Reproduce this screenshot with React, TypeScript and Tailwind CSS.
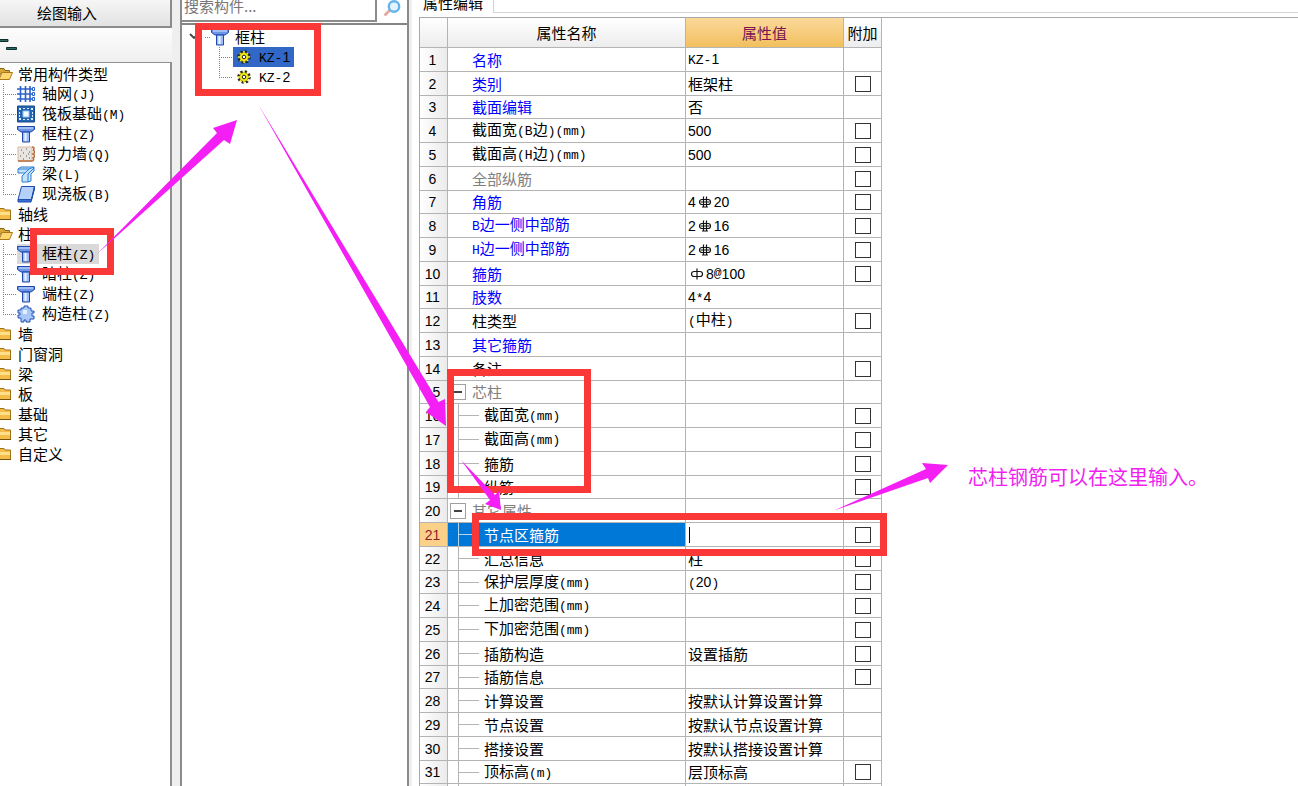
import { Fragment, useState } from "react";
import type { ReactNode } from "react";

type Tone = "blue" | "gray" | "black";

interface PropertyRow {
  name: string;
  value?: ReactNode;
  text?: string;
  tone?: Tone;
  kind?: "plain" | "group" | "child";
  check?: boolean;
}

const TONES: Record<Tone, string> = {
  blue: "text-[#0000ff]",
  gray: "text-[#808080]",
  black: "text-black",
};

// Latin runs are half the width of a Chinese character
function Label({ children }: { children: string }) {
  return (
    <>
      {children.split(/(\d+|[\x20-\x2f\x3a-\x7e]+)/).map((part, i) => {
        if (i % 2 === 0) return <Fragment key={i}>{part}</Fragment>;
        return /\d/.test(part) ? (
          <span key={i} className="font-['Liberation_Sans',sans-serif] text-sm/5">
            {part}
          </span>
        ) : (
          <span key={i} className="font-['Liberation_Mono',monospace] text-[13px]/5">
            {part}
          </span>
        );
      })}
    </>
  );
}

function Rebar({ grade }: { grade: 1 | 3 }) {
  return (
    <svg
      viewBox="0 0 14 14"
      className="mx-0.5 size-3.5 shrink-0"
      fill="none"
      stroke="#111"
      strokeWidth="1.2"
      role="img"
      aria-label={grade === 3 ? "HRB400" : "HPB300"}
    >
      <rect x="1.5" y="4.5" width="11" height="5" rx="2.5" />
      {grade === 1 ? <path d="M7 1.5v11" /> : <path d="M5.5 1.5v11M8.5 1.5v11M2.5 7h9M4 12h6" />}
    </svg>
  );
}

const ROWS: PropertyRow[] = [
  { name: "名称", tone: "blue", text: "KZ-1", check: false },
  { name: "类别", tone: "blue", text: "框架柱" },
  { name: "截面编辑", tone: "blue", text: "否", check: false },
  { name: "截面宽(B边)(mm)", text: "500" },
  { name: "截面高(H边)(mm)", text: "500" },
  { name: "全部纵筋", tone: "gray" },
  { name: "角筋", tone: "blue", value: <><Label>4</Label><Rebar grade={3} /><Label>20</Label></> },
  { name: "B边一侧中部筋", tone: "blue", value: <><Label>2</Label><Rebar grade={3} /><Label>16</Label></> },
  { name: "H边一侧中部筋", tone: "blue", value: <><Label>2</Label><Rebar grade={3} /><Label>16</Label></> },
  { name: "箍筋", tone: "blue", value: <><Rebar grade={1} /><Label>8@100</Label></> },
  { name: "肢数", tone: "blue", text: "4*4", check: false },
  { name: "柱类型", text: "(中柱)" },
  { name: "其它箍筋", tone: "blue", check: false },
  { name: "备注" },
  { name: "芯柱", tone: "gray", kind: "group", check: false },
  { name: "截面宽(mm)", kind: "child" },
  { name: "截面高(mm)", kind: "child" },
  { name: "箍筋", kind: "child" },
  { name: "纵筋", kind: "child" },
  { name: "其它属性", tone: "gray", kind: "group", check: false },
  { name: "节点区箍筋", kind: "child" },
  { name: "汇总信息", kind: "child", text: "柱" },
  { name: "保护层厚度(mm)", kind: "child", text: "(20)" },
  { name: "上加密范围(mm)", kind: "child" },
  { name: "下加密范围(mm)", kind: "child" },
  { name: "插筋构造", kind: "child", text: "设置插筋" },
  { name: "插筋信息", kind: "child" },
  { name: "计算设置", kind: "child", text: "按默认计算设置计算", check: false },
  { name: "节点设置", kind: "child", text: "按默认节点设置计算", check: false },
  { name: "搭接设置", kind: "child", text: "按默认搭接设置计算", check: false },
  { name: "顶标高(m)", kind: "child", text: "层顶标高" },
  { name: "", kind: "child", check: false },
];

function ColumnIcon() {
  return (
    <svg viewBox="0 0 18 18" className="size-[18px] shrink-0">
      <path d="M.5 1.5h17v3L14 7H4L.5 4.5z" fill="#6d96e6" stroke="#1d48ac" />
      <path d="M2 3h14" stroke="#d6e4ff" />
      <path d="M5.500 7h7v10h-7z" fill="#9dbcf8" stroke="#1d48ac" />
      <path d="M8.500 8v8" stroke="#eef5ff" strokeWidth="2" />
    </svg>
  );
}

function GridIcon() {
  return (
    <svg viewBox="0 0 18 18" className="size-[18px] shrink-0" fill="none" stroke="#2c62cc" strokeWidth="1.6">
      <path d="M3.500 1v16M8.500 1v16M13 1v16M0 4h15M0 9h15M0 14h15" />
      <path d="M15.500 2.500h2v3h-2zM15.500 7.500h2v3h-2zM15.500 12.500h2v3h-2z" strokeWidth="1" />
    </svg>
  );
}

function RaftIcon() {
  return (
    <svg viewBox="0 0 18 18" className="size-[18px] shrink-0">
      <path d="M.5 1h17v16H.5z" fill="#2464b0" stroke="#174a8c" />
      <path d="M6 6h6v6H6z" fill="#f4faff" stroke="#8fc0f0" />
      <path d="M2 3h2v2H2zM6 3h2v1H6zM10 3h2v1h-2zM14 3h2v2h-2zM2 7h1v2H2zM2 10h1v2H2zM15 7h1v2h-1zM15 10h1v2h-1zM2 13h2v2H2zM6 14h2v1H6zM10 14h2v1h-2zM14 13h2v2h-2z" fill="#d5e9ff" />
    </svg>
  );
}

function WallIcon() {
  return (
    <svg viewBox="0 0 18 18" className="size-[18px] shrink-0">
      <path d="M1 2h14v14H1z" fill="#e9e6e2" stroke="#dcb8a0" />
      <path d="M15 2c3 0 2 3 1 3 2 1 2 3 0 4 2 1 2 3 0 4 1 1 1 3-1 3H1" fill="none" stroke="#b96d3e" strokeWidth="1.5" />
      <path d="M4 5h1M9 4h1M12 7h1M6 8h1M3 11h1M9 11h1M12 13h1M6 14h1M11 9h1" stroke="#555" />
    </svg>
  );
}

function BeamIcon() {
  return (
    <svg viewBox="0 0 18 18" className="size-[18px] shrink-0" stroke="#2f7fd0" strokeLinejoin="round">
      <path d="M1 4l3-2h13v4l-3 3v7l-3 1H5v-6l3-3H1z" fill="#c4e2fb" />
      <path d="M1 4h11l5-2M12 4L5 11M17 3l-6 6v8M8 8l4-4" fill="none" />
    </svg>
  );
}

function SlabIcon() {
  return (
    <svg viewBox="0 0 18 18" className="size-[18px] shrink-0" stroke="#1e4fae" strokeLinejoin="round">
      <path d="M4.500 1.500h13l-3 13H1z" fill="#b5d0fb" />
      <path d="M1 14.500v2.500h13l3.500-13V1.500l-3 13z" fill="#3a6fd2" />
    </svg>
  );
}

function TieColumnIcon() {
  return (
    <svg viewBox="0 0 18 18" className="size-[18px] shrink-0">
      <path d="M4 3h3V1h4v2h3v3h3v2h-2v3h2v3h-4v3H9v-2H7v2H4v-4H1v-3h2V8H1V5h3z" fill="#a9c8fa" stroke="#2450b4" />
      <path d="M6 5h4v4H6z" fill="#e5f0ff" />
    </svg>
  );
}

function Folder({ open }: { open?: boolean }) {
  return (
    <svg viewBox="0 0 13 16" className="h-4 w-[13px] shrink-0">
      {open ? (
        <>
          <path d="M-1 2.500h5l1 2h4.500V8H-1z" fill="#d9a63a" stroke="#8c6415" />
          <path d="M-1 13.500L2 6.500h10.500l-3 7z" fill="#ffd970" stroke="#a9781c" />
        </>
      ) : (
        <>
          <path d="M-1 2.500h5l1 1.500h5.500v9.500H-1z" fill="#f3bd48" stroke="#a06f17" />
          <path d="M0 6h10v3H0z" fill="#ffdf8c" />
          <path d="M0 13.500h11" stroke="#7a5510" />
        </>
      )}
    </svg>
  );
}

function Gear() {
  return (
    <svg viewBox="0 0 14 14" className="size-3.5 shrink-0">
      <circle cx="7" cy="7" r="5.5" fill="none" stroke="#222" strokeWidth="2.5" strokeDasharray="2.2 2.12" />
      <circle cx="7" cy="7" r="4.5" fill="#f6ec1c" stroke="#4a4600" strokeWidth=".8" />
      <path d="M7 1v12M1 7h12M3 3l8 8M11 3l-8 8" stroke="#f6ec1c" strokeWidth="1.4" />
      <circle cx="7" cy="7" r="1.8" fill="#fff" stroke="#222" />
    </svg>
  );
}

type TreeLeaf = { label: string; icon: () => ReactNode; selected?: boolean };
type TreeNode = { label: string; open?: boolean; children?: TreeLeaf[] };

const TREE: TreeNode[] = [
  {
    label: "常用构件类型",
    open: true,
    children: [
      { label: "轴网(J)", icon: GridIcon },
      { label: "筏板基础(M)", icon: RaftIcon },
      { label: "框柱(Z)", icon: ColumnIcon },
      { label: "剪力墙(Q)", icon: WallIcon },
      { label: "梁(L)", icon: BeamIcon },
      { label: "现浇板(B)", icon: SlabIcon },
    ],
  },
  { label: "轴线" },
  {
    label: "柱",
    open: true,
    children: [
      { label: "框柱(Z)", icon: ColumnIcon, selected: true },
      { label: "暗柱(Z)", icon: ColumnIcon },
      { label: "端柱(Z)", icon: ColumnIcon },
      { label: "构造柱(Z)", icon: TieColumnIcon },
    ],
  },
  { label: "墙" },
  { label: "门窗洞" },
  { label: "梁" },
  { label: "板" },
  { label: "基础" },
  { label: "其它" },
  { label: "自定义" },
];

function Branch({ last }: { last?: boolean }) {
  return (
    <svg viewBox="0 0 14 20" className="h-5 w-3.5 shrink-0" stroke="#808080" strokeDasharray="1 1">
      <path d={last ? "M.5 0v10M0 10.5h14" : "M.5 0v20M0 10.5h14"} fill="none" />
    </svg>
  );
}

function ComponentTypes() {
  return (
    <aside className="flex w-[172px] shrink-0 flex-col">
      <button
        type="button"
        className="h-7 border-r-2 border-b-2 border-[#8c8c8c] bg-linear-to-b from-[#f6f6f6] to-[#e2e2e2] pr-9 text-center"
      >
        绘图输入
      </button>
      <div className="flex h-[34px] items-center bg-linear-to-b from-[#fdfdfd] to-[#f0f0f0]">
        <svg viewBox="0 0 20 14" className="h-3.5 w-5" fill="#2c6a62" stroke="#0c2f30">
          <path d="M-1 1.500h9v2h-9zM6.500 9.500h10v2h-10z" />
        </svg>
      </div>
      <ul className="flex-1 overflow-hidden border-t border-r-2 border-[#909090] bg-white pt-px">
        {TREE.map((node) => (
          <li key={node.label}>
            <div className="flex h-5 items-center gap-[5px]">
              <Folder open={node.open} />
              {node.label}
            </div>
            <ul>
              {node.children?.map((leaf, i) => (
                <li key={leaf.label} className="flex h-5 items-center pl-[3px]">
                  <Branch last={i === node.children!.length - 1} />
                  <span
                    className={
                      leaf.selected
                        ? "flex h-5 items-center gap-[7px] bg-[#d9d9d9] pr-1"
                        : "flex h-5 items-center gap-[7px]"
                    }
                  >
                    <leaf.icon />
                    <span>
                      <Label>{leaf.label}</Label>
                    </span>
                  </span>
                </li>
              ))}
            </ul>
          </li>
        ))}
      </ul>
    </aside>
  );
}

function ComponentList() {
  return (
    <section className="flex w-[229px] shrink-0 flex-col border-x-2 border-[#8a8a8a] bg-white">
      <div className="flex h-[25px] items-start border-b-2 border-[#858585]">
        <input
          type="text"
          aria-label="搜索构件"
          placeholder="搜索构件..."
          className="h-[22px] min-w-0 flex-1 border-r-2 border-b-2 border-[#8c8c8c] px-0.5 pb-2.5 placeholder:text-[#777]"
        />
        <button type="button" aria-label="搜索" className="flex w-[30px] justify-center">
          <svg viewBox="0 0 18 18" className="size-[18px]" fill="none">
            <path d="M2.500 14.500l4-4" stroke="#e3aaa0" strokeWidth="3" strokeLinecap="round" />
            <circle cx="11" cy="6.500" r="5.200" fill="#e3f4ff" stroke="#66b3ec" strokeWidth="2.4" />
          </svg>
        </button>
      </div>
      <div className="pt-0.5 pl-[7px]">
        <div className="flex h-5 items-center">
          <svg viewBox="0 0 10 10" className="size-2.5" fill="none" stroke="#444" strokeWidth="1.8">
            <path d="M1 2l4 4 4-4" />
          </svg>
          <svg viewBox="0 0 12 10" className="h-2.5 w-3" stroke="#808080" strokeDasharray="1 1">
            <path d="M6 5.500h6" />
          </svg>
          <span className="flex items-center gap-1.5">
            <ColumnIcon />
            框柱
          </span>
        </div>
        {["KZ-1", "KZ-2"].map((name, i) => (
          <div key={name} className="flex h-5 items-center pl-[30px]">
            <Branch last={i === 1} />
            <span
              className={
                i === 0 ? "flex h-5 items-center gap-2 bg-[#3168c8] px-1" : "flex h-5 items-center gap-2 px-1"
              }
            >
              <Gear />
              <span>
                <Label>{name}</Label>
              </span>
            </span>
          </div>
        ))}
      </div>
    </section>
  );
}

const LINE = "border-r border-b border-[#b4b4b4]";
const CELL_HEIGHT = "h-[23px] group-nth-[4n+3]:h-[22px]";

function NameCell({ row, selected }: { row: PropertyRow; selected: boolean }) {
  const kind = row.kind ?? "plain";
  const rule = selected ? "border-white/70" : "border-[#b4b4b4]";
  return (
    <div
      className={`flex items-center overflow-hidden whitespace-nowrap ${CELL_HEIGHT} ${selected ? "bg-[#0078d7] text-white" : TONES[row.tone ?? "black"]}`}
    >
      {kind === "plain" && <span className="w-6" />}
      {kind === "group" && (
        <button
          type="button"
          aria-label={`折叠${row.name}`}
          className="mr-1.5 ml-0.5 flex size-4 items-center justify-center border border-[#a0a0a0] bg-white"
        >
          <span className="h-0.5 w-2 bg-[#444]" />
        </button>
      )}
      {kind === "child" && (
        <span className={`mr-[5px] ml-2.5 flex w-[21px] self-stretch border-l ${rule}`}>
          {row.name && <span className={`w-5 self-center border-t ${rule}`} />}
        </span>
      )}
      <span>
        <Label>{row.name}</Label>
      </span>
    </div>
  );
}

function PropertyTable() {
  const [checked, setChecked] = useState<number[]>([]);
  const selectedRow = 21;

  const toggle = (n: number) =>
    setChecked((prev) => (prev.includes(n) ? prev.filter((x) => x !== n) : [...prev, n]));

  return (
    <table className="w-[462px] table-fixed border-separate border-spacing-0">
      <colgroup>
        <col className="w-7" />
        <col className="w-[238px]" />
        <col className="w-[158px]" />
        <col className="w-[38px]" />
      </colgroup>
      <thead>
        <tr className="h-[30px] bg-linear-to-b from-white to-[#ececec]">
          <th aria-label="序号" className={`${LINE} font-normal`} />
          <th className={`${LINE} p-0 font-normal`}>属性名称</th>
          <th className={`${LINE} bg-linear-to-b from-[#fbd99a] to-[#f2bf5c] p-0 font-normal text-[#7a1250]`}>
            属性值
          </th>
          <th className={`${LINE} p-0 font-normal whitespace-nowrap`}>附加</th>
        </tr>
      </thead>
      <tbody>
        {ROWS.map((row, i) => {
          const n = i + 1;
          const selected = n === selectedRow;
          return (
            <tr key={n} className="group">
              <td
                className={`${LINE} p-0 ${selected ? "bg-[#fbd18a] text-[#8c1d2c]" : "bg-linear-to-r from-white to-[#ebebeb]"}`}
              >
                <div className={`flex items-center justify-center overflow-hidden pr-0.5 ${CELL_HEIGHT}`}>
                  {row.name && <Label>{String(n)}</Label>}
                </div>
              </td>
              <td className={`${LINE} p-0`}>
                <NameCell row={row} selected={selected} />
              </td>
              <td className={`${LINE} p-0`}>
                <div className={`flex items-center overflow-hidden pl-0.5 whitespace-nowrap ${CELL_HEIGHT}`}>
                  {selected ? (
                    <>
                      <span className="ml-px h-4 w-px shrink-0 bg-black" />
                      <input type="text" aria-label={row.name} className="h-5 min-w-0 flex-1 outline-none" />
                    </>
                  ) : (
                    (row.value ?? (
                      <span>
                        <Label>{row.text ?? ""}</Label>
                      </span>
                    ))
                  )}
                </div>
              </td>
              <td className={`${LINE} p-0`}>
                <div className={`flex items-center justify-center ${CELL_HEIGHT}`}>
                  {row.check !== false && (
                    <input
                      type="checkbox"
                      aria-label={`附加 ${row.name}`}
                      checked={checked.includes(n)}
                      onChange={() => toggle(n)}
                      className="size-4 appearance-none border border-[#333] bg-white checked:bg-[#333]"
                    />
                  )}
                </div>
              </td>
            </tr>
          );
        })}
      </tbody>
    </table>
  );
}

function Annotations() {
  return (
    <div className="pointer-events-none absolute inset-0">
      <div className="absolute top-[23px] left-[195px] h-[73px] w-[126px] border-7 border-[#fb3838]" />
      <div className="absolute top-[228px] left-[30px] h-[47px] w-[84px] border-7 border-[#fb3838]" />
      <div className="absolute top-[369px] left-[447px] h-[124px] w-[144px] border-7 border-[#fb3838]" />
      <div className="absolute top-[513px] left-[472px] h-[43px] w-[415px] border-7 border-[#fb3838]" />
      <svg width="1298" height="786" viewBox="0 0 1298 786" className="absolute top-0 left-0" fill="#f41ff4">
        <path d="M97 254L217 133L213 128L237 120L230 144L224 140Z" />
        <path d="M258 104L438.500 402L445 399L446 426L426 412L430 407Z" />
        <path d="M461 460L495 495L499 491L501 510L485 504L490 500Z" />
        <path d="M834 510.500L926 469L922 463L948 465L930 483L928 478Z" />
      </svg>
      <p className="absolute top-[465px] left-[968px] text-xl/6 whitespace-nowrap text-[#f01ff0]">
        芯柱钢筋可以在这里输入。
      </p>
    </div>
  );
}

export default function App() {
  return (
    <main className="relative flex h-screen overflow-hidden bg-[#efefef] font-['Noto_Sans_CJK_SC',sans-serif] text-[15px]/5 text-black">
      <ComponentTypes />
      <div className="w-2 shrink-0" />
      <ComponentList />
      <div className="w-[3px] shrink-0" />
      <section className="flex min-w-0 flex-1 flex-col bg-white pl-[7px]">
        <div className="flex h-[13px] items-end">
          <button type="button" className="h-5 w-[74px] shrink-0 pr-1.5 whitespace-nowrap">
            属性编辑
          </button>
          <div className="h-full flex-1 border-b border-l border-[#d4d4d4]" />
        </div>
        <div className="mt-1 flex-1 overflow-hidden border-t border-l border-[#a8a8a8]">
          <PropertyTable />
        </div>
      </section>
      <Annotations />
    </main>
  );
}
